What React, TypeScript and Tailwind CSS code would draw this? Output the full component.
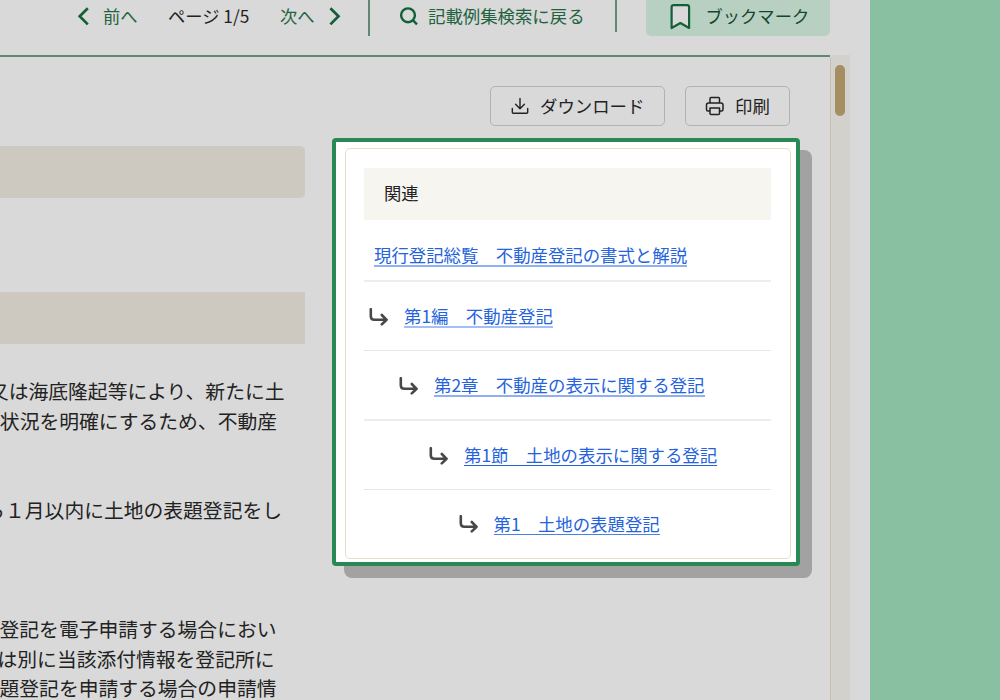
import React from 'react';

const related = [
  { label: '第1編　不動産登記', pad: 'pl-[5px]', line: 'border-b-[2px] border-[#a3bff6]', rule: 'border-b-[1.5px] border-[#e6e6e6]', nudge: 'pt-[2px]' },
  { label: '第2章　不動産の表示に関する登記', pad: 'pl-[35px]', line: 'border-b-[2px] border-[#8eb0f3]', rule: 'border-b-2 border-[#ededed]', nudge: 'pt-[2px]' },
  { label: '第1節　土地の表示に関する登記', pad: 'pl-[65px]', line: 'border-b border-[#2563dc]', rule: 'border-b border-[#e6e6e6]', nudge: 'pt-[2px]' },
  { label: '第1　土地の表題登記', pad: 'pl-[94.5px]', line: 'border-b border-[#4a80e8]', rule: '', nudge: 'pb-[1px]' },
];

function Arrow() {
  return (
    <svg className="h-[18px] w-[20px] shrink-0" viewBox="0 0 20 18" fill="none" stroke="#484848" strokeWidth="2.6" strokeLinecap="round" strokeLinejoin="round">
      <path d="M1.8 1.2V8.2Q1.8 11.8 5.4 11.8H17.6M12.8 7L17.6 11.8L12.8 16.4" />
    </svg>
  );
}

function Chevron({ d }: { d: string }) {
  return (
    <svg className="h-5 w-3 shrink-0" viewBox="0 0 12 20" fill="none" stroke="#126038" strokeWidth="2.7">
      <path d={d} />
    </svg>
  );
}

function Toolbar() {
  return (
    <header className="flex h-[57px] w-[830px] shrink-0 items-start border-b-2 border-[#5f8873] text-[17.3px] leading-8 text-[#22633f]">
      <div className="flex h-8 items-center pl-[77px]">
        <Chevron d="M10.8 2.2L2.7 10.3L10.8 18.4" />
        <span className="ml-[14px] w-[65px]">前へ</span>
        <span className="w-[112px] text-[#222]">ページ 1/5</span>
        <span className="w-[49px]">次へ</span>
        <Chevron d="M1.4 2.2L9.5 10.3L1.4 18.4" />
      </div>
      <div className="ml-[27px] h-9 w-[2px] bg-[#5f8873]" />
      <div className="flex h-8 items-center pl-[29px]">
        <svg className="h-5 w-5" viewBox="0 0 20 20" fill="none" stroke="#126038" strokeWidth="2.4">
          <circle cx="9" cy="9.3" r="6.9" />
          <path d="M13.8 14.2L18 18.4" />
        </svg>
        <span className="ml-[9px] w-[187px] text-[17.4px]">記載例集検索に戻る</span>
      </div>
      <div className="h-8 w-[2px] bg-[#5f8873]" />
      <div className="ml-[28.5px] flex h-[36px] w-[184.5px] rounded-b-[5px] bg-[#b8d0c2] pl-[24.5px] text-[#17452c]">
        <svg className="mt-1 h-[26px] w-[21px]" viewBox="0 0 21 26" fill="#d9d9d9" stroke="#126038" strokeWidth="2.2" strokeLinejoin="round">
          <path d="M1.6 24V3.3Q1.6 1.2 3.7 1.2H17Q19.1 1.2 19.1 3.3V24L10.4 19Z" />
        </svg>
        <span className="ml-[14.5px]">ブックマーク</span>
      </div>
    </header>
  );
}

function Actions() {
  return (
    <div className="mt-[29px] flex h-10 justify-end gap-[20px] pr-10 text-[17.4px] text-[#222]">
      <div className="flex w-[175px] items-center rounded-[5px] border-[1.5px] border-[#b2b2b2] pl-[20px]">
        <svg className="h-[18px] w-[18px]" viewBox="0 0 18 18" fill="none" stroke="#222" strokeWidth="1.4" strokeLinejoin="round" strokeLinecap="round">
          <path d="M9 1.5V11.5M4.6 7.3L9 11.7L13.4 7.3M1.3 11.5V15.3Q1.3 16.2 2.2 16.2H15.8Q16.7 16.2 16.7 15.3V11.5" />
        </svg>
        <span className="ml-[11px] whitespace-nowrap">ダウンロード</span>
      </div>
      <div className="flex w-[105px] items-center rounded-[5px] border-[1.5px] border-[#b2b2b2] pl-[19px]">
        <svg className="h-5 w-5" viewBox="0 0 20 20" fill="none" stroke="#222" strokeWidth="1.5" strokeLinejoin="round">
          <path d="M5 7V2.5Q5 1.5 6 1.5H13.5Q14.5 1.5 14.5 2.5V7M5 15H3Q1.5 15 1.5 13.5V9Q1.5 7 3.5 7H16Q18 7 18 9V13.5Q18 15 16.5 15H14.5M5 12H14.5V17.5Q14.5 18.5 13.5 18.5H6Q5 18.5 5 17.5Z" />
        </svg>
        <span className="ml-[10px]">印刷</span>
      </div>
    </div>
  );
}

function Line({ children, width }: { children: string; width: string }) {
  return <div className={`flex h-[29.8px] justify-end whitespace-nowrap ${width}`}>{children}</div>;
}

function Document() {
  return (
    <div className="mt-5 text-[19.8px] leading-[29.8px] text-[#222]">
      <div className="h-[52px] w-[305px] rounded-r-[5px] bg-[#cdc8c0]" />
      <div className="mt-[94px] h-[52px] w-[305px] bg-[#cdc8c0]" />
      <div className="mt-[32px]">
        <Line width="w-[284.5px]">又は海底隆起等により、新たに土</Line>
        <Line width="w-[277px]">状況を明確にするため、不動産</Line>
      </div>
      <div className="mt-[59px]">
        <Line width="w-[282px]">ら１月以内に土地の表題登記をし</Line>
      </div>
      <div className="mt-[89.4px]">
        <Line width="w-[276.5px]">登記を電子申請する場合におい</Line>
        <Line width="w-[274.5px]">は別に当該添付情報を登記所に</Line>
        <Line width="w-[276.5px]">題登記を申請する場合の申請情</Line>
      </div>
    </div>
  );
}

function RelatedPanel() {
  return (
    <div className="absolute left-[332px] top-[138px] h-[428px] w-[468px]">
      <div className="absolute left-3 top-3 h-[428px] w-[468px] rounded-[8px] bg-[#a2a2a2]" />
      <div className="relative h-full rounded-[4px] border-4 border-[#2a8854] bg-white pl-[8.5px] pt-[6px]">
        <div className="h-[411px] w-[446px] rounded-[5px] border-[1.5px] border-[#eadccb] pl-[18.5px] pr-[18.5px] pt-[18.5px]">
          <div className="flex h-[52px] items-center bg-[#f7f5f0] pb-[2px] pl-5 text-[17.3px] text-[#222]">関連</div>
          <div className="flex h-[62px] items-center border-b-2 border-[#ededed] pl-[10px] pt-[12px]">
            <a className="border-b-2 border-[#8eb0f5] text-[17.4px] leading-[20px] text-[#2563dc]">現行登記総覧　不動産登記の書式と解説</a>
          </div>
          {related.map((item) => (
            <div key={item.label} className={`flex h-[69.5px] items-center ${item.rule} ${item.nudge} ${item.pad}`}>
              <Arrow />
              <a className={`ml-[15px] whitespace-nowrap text-[17.4px] leading-[20px] text-[#2563dc] ${item.line}`}>{item.label}</a>
            </div>
          ))}
        </div>
      </div>
    </div>
  );
}

export default function App() {
  return (
    <div className="flex h-[700px] w-[1000px] overflow-hidden bg-[#8ac0a2] font-['Noto_Sans_CJK_JP',sans-serif]">
      <main className="relative flex h-[700px] w-[870px] shrink-0 flex-col overflow-hidden bg-[#d9d9d9]">
        <Toolbar />
        <div className="flex min-h-0 flex-1">
          <section className="w-[831px] overflow-hidden border-r border-[#c9bdad]">
            <Actions />
            <Document />
          </section>
          <div className="-mt-[2px] flex w-[19px] bg-[#d2d1cc] pl-[4px] pt-[10px]">
            <div className="h-[51px] w-[10px] rounded-full bg-[#a48e62]" />
          </div>
        </div>
        <RelatedPanel />
      </main>
    </div>
  );
}
